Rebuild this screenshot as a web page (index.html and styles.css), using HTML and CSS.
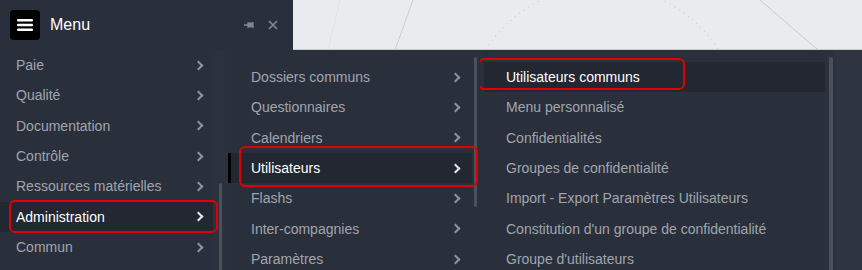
FILE: index.html
```html
<!DOCTYPE html>
<html lang="fr">
<head>
<meta charset="utf-8">
<title>Menu</title>
<link rel="stylesheet" href="styles.css">
</head>
<body>
<div class="app">
  <div class="top">
    <header class="menu-head">
      <div class="burger">
        <svg width="16" height="14" viewBox="0 0 16 14"><rect x="0" y="1" width="16" height="2.4" rx="1" fill="#fff"/><rect x="0" y="5.8" width="16" height="2.4" rx="1" fill="#fff"/><rect x="0" y="10.6" width="16" height="2.4" rx="1" fill="#fff"/></svg>
      </div>
      <span class="menu-title">Menu</span>
      <span class="head-tools">
        <svg class="pin" width="10" height="10" viewBox="0 0 10 10"><path d="M0 5h4" stroke="#80868f" stroke-width="1.6"/><path d="M4 2.2v5.6M5 3.2h3v3.6H5z" fill="#80868f" stroke="#80868f" stroke-width="1.4"/><path d="M9 2v6" stroke="#80868f" stroke-width="1.4"/></svg>
        <svg class="close" width="10" height="10" viewBox="0 0 10 10"><path d="M1 1l8 8M9 1l-8 8" stroke="#80868f" stroke-width="1.7"/></svg>
      </span>
    </header>
    <div class="backdrop">
      <svg width="569" height="50" viewBox="293 0 569 50">
        <path d="M340 0 L328 50" stroke="#dfe2e6" stroke-width="1" fill="none"/>
        <path d="M413 0 L395 50" stroke="#c9cdd3" stroke-width="1" fill="none"/>
        <circle cx="602" cy="124" r="138" stroke="#d3d7dc" stroke-width="1.2" fill="none" stroke-dasharray="1.5 4"/>
        <path d="M760 0 L818 50" stroke="#c7cbd1" stroke-width="1" fill="none"/>
      </svg>
    </div>
  </div>
  <div class="body">
    <div class="col col1">
      <ul class="list">
        <li class="item">Paie<i class="chev"></i></li>
        <li class="item">Qualité<i class="chev"></i></li>
        <li class="item">Documentation<i class="chev"></i></li>
        <li class="item">Contrôle<i class="chev"></i></li>
        <li class="item">Ressources matérielles<i class="chev"></i></li>
        <li class="item active">Administration<i class="chev"></i><span class="mark mark-admin"></span></li>
        <li class="item">Commun<i class="chev"></i></li>
      </ul>
      <div class="track track1"><div class="thumb thumb1"></div></div>
    </div>
    <div class="col col2">
      <ul class="list">
        <li class="item">Dossiers communs<i class="chev"></i></li>
        <li class="item">Questionnaires<i class="chev"></i></li>
        <li class="item">Calendriers<i class="chev"></i></li>
        <li class="item active marked">Utilisateurs<i class="chev"></i><span class="mark mark-users"></span></li>
        <li class="item">Flashs<i class="chev"></i></li>
        <li class="item">Inter-compagnies<i class="chev"></i></li>
        <li class="item">Paramètres<i class="chev"></i></li>
      </ul>
      <div class="track track2"><div class="thumb thumb2"></div></div>
    </div>
    <div class="col col3">
      <ul class="list">
        <li class="item active">Utilisateurs communs<span class="mark mark-common"></span></li>
        <li class="item">Menu personnalisé</li>
        <li class="item">Confidentialités</li>
        <li class="item">Groupes de confidentialité</li>
        <li class="item">Import - Export Paramètres Utilisateurs</li>
        <li class="item">Constitution d'un groupe de confidentialité</li>
        <li class="item">Groupe d'utilisateurs</li>
      </ul>
      <div class="track track3"><div class="thumb thumb3"></div></div>
    </div>
    <div class="rest"></div>
  </div>
</div>
</body>
</html>
```
FILE: styles.css
```css
* { box-sizing: border-box; }
html, body { margin: 0; padding: 0; }
body {
  width: 862px;
  height: 270px;
  overflow: hidden;
  background: #2a303b;
  font-family: "Liberation Sans", Arial, sans-serif;
  font-size: 14px;
}
.app { display: flex; flex-direction: column; height: 270px; }
.top { display: flex; height: 50px; flex: none; }
.menu-head {
  width: 293px;
  background: #2a303b;
  display: flex;
  align-items: center;
  padding-left: 10px;
  position: relative;
  z-index: 2;
}
.burger {
  width: 30px; height: 30px;
  background: #000;
  border-radius: 4px;
  display: flex; align-items: center; justify-content: center;
}
.menu-title {
  color: #fff;
  font-size: 16px;
  margin-left: 10px;
  margin-top: -1px;
}
.head-tools {
  margin-left: auto;
  display: flex;
  align-items: center;
  gap: 14px;
  padding-right: 15px;
}
.backdrop {
  flex: 1;
  background: #e9ecef;
  border-bottom: 1px solid #c8ccd1;
  overflow: hidden;
}
.backdrop svg { display: block; }
.body { display: flex; flex: 1; min-height: 0; }
.col { display: flex; overflow: hidden; }
.list { list-style: none; margin: 0; padding: 0; flex: 1; }
.item {
  height: 30.33px;
  display: flex;
  align-items: center;
  color: #a0a5ad;
  position: relative;
  white-space: nowrap;
}
.item.active { color: #fff; background: #222731; }
.chev {
  margin-left: auto;
  width: 7px; height: 7px;
  border-right: 2px solid #8d939b;
  border-top: 2px solid #8d939b;
  transform: rotate(45deg);
}
.item.active .chev { border-color: #e6e8eb; }

/* column 1 */
.col1 { width: 228px; }
.col1 .item { padding-left: 16px; padding-right: 11px; }
.track { flex: none; display: flex; }
.track1 { width: 15px; background: #2c323d; padding-left: 6px; }
.thumb { width: 3px; background: #4b5159; border-radius: 2px; }
.thumb1 { margin-top: 133px; height: 100px; }

/* column 2 */
.col2 { width: 252px; background: #2a303b; }
.col2 .list { padding-top: 12px; }
.col2 .item { padding-left: 23px; padding-right: 13px; }
.col2 .item.marked { border-left: 3px solid #000; padding-left: 20px; }
.track2 { width: 8px; padding-left: 2px; }
.thumb2 { margin-top: 7px; height: 150px; }

/* column 3 */
.col3 { width: 355px; }
.col3 .list { padding-top: 12px; margin-left: 4px; }
.col3 .item { padding-left: 22px; }
.track3 { width: 10px; background: #2c323d; padding-left: 4px; }
.thumb3 { margin-top: 7px; height: 220px; width: 4px; }
.rest { flex: 1; background: #2e3440; }

/* red annotation outlines */
.mark {
  position: absolute;
  border: 2px solid #e00000;
  border-radius: 6px;
  pointer-events: none;
}
.mark-admin { left: 9px; right: -5px; top: -2px; bottom: -1px; }
.mark-users { left: 8px; right: -6px; top: -7px; bottom: -4px; }
.mark-common { left: -6px; width: 207px; top: -4px; height: 32px; }
```
